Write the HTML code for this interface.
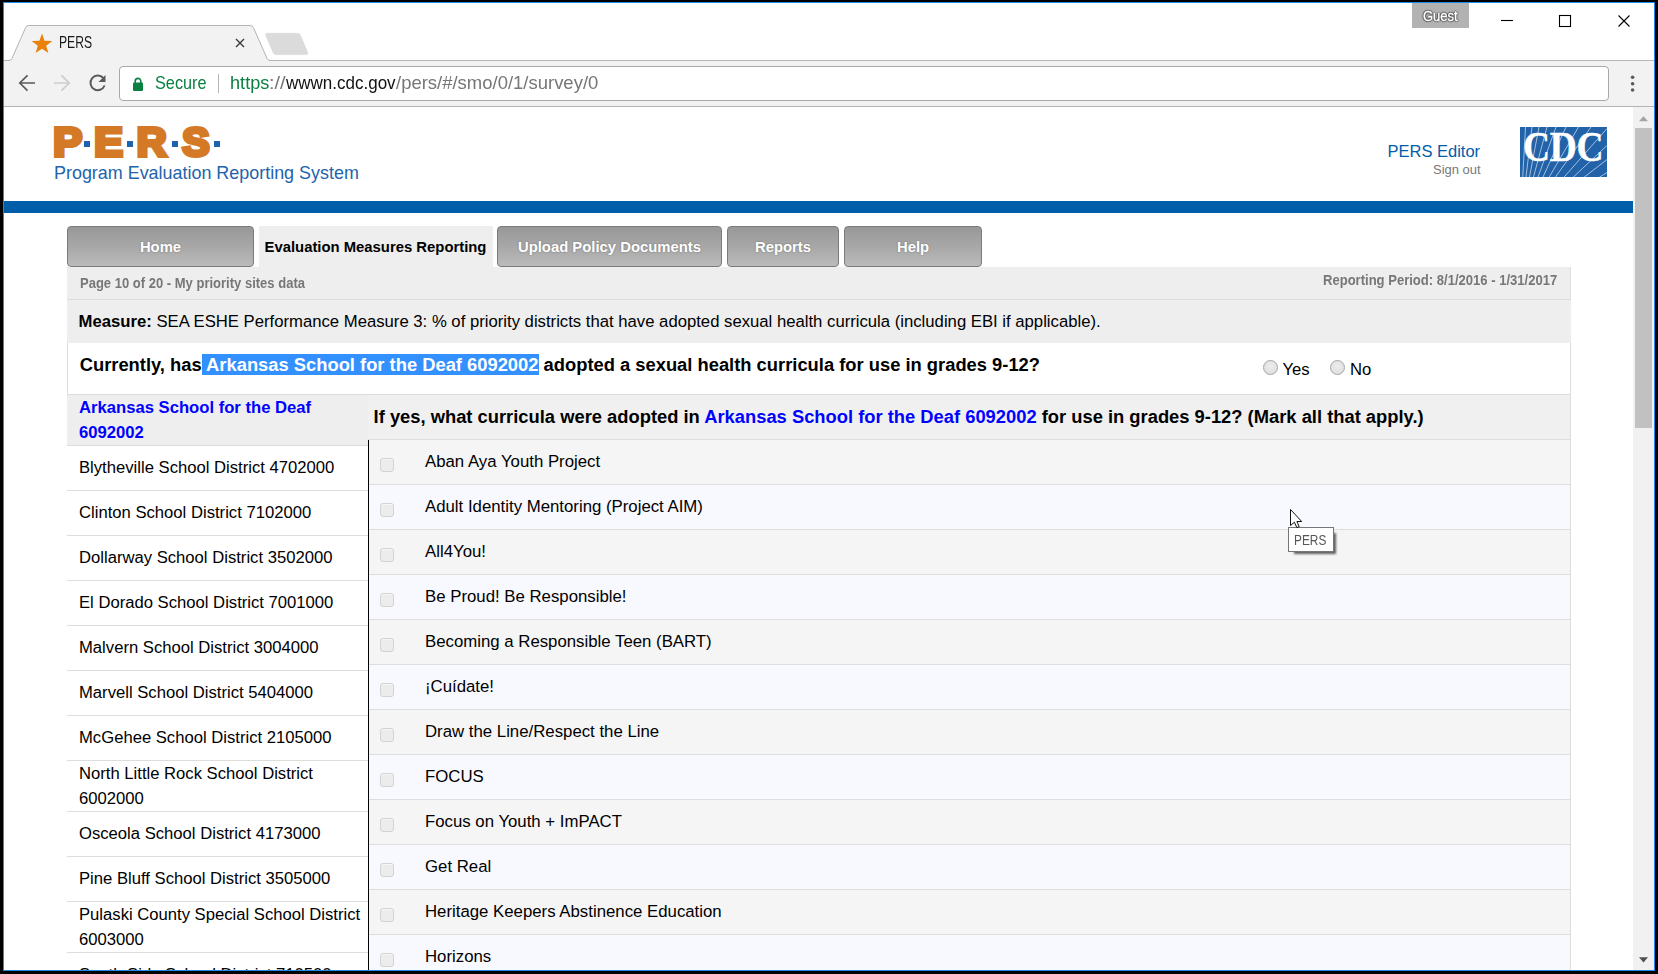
<!DOCTYPE html>
<html lang="en">
<head>
<meta charset="utf-8">
<title>PERS</title>
<style>
*{box-sizing:border-box;margin:0;padding:0}
html,body{width:1658px;height:974px;overflow:hidden;background:#000}
body{position:relative;font-family:"Liberation Sans",Arial,sans-serif;color:#000}
.abs{position:absolute}
#win{position:absolute;left:3px;top:2px;width:1652px;height:969px;background:#fff;border:1px solid #1c8ae6;overflow:hidden}
/* everything inside #win is positioned in screen coords via #sc (offset -4,-3) */
#sc{position:absolute;left:-4px;top:-3px;width:1658px;height:974px}
.t{position:absolute;white-space:nowrap;line-height:1}
/* chrome */
#toolbar{left:4px;top:60px;width:1650px;height:46px;background:#f2f2f2}
#tbline{left:4px;top:106px;width:1650px;height:1px;background:#b4b2b4}
#omni{left:119px;top:66px;width:1490px;height:35px;background:#fff;border:1px solid #a9a9a9;border-radius:4px}
.ui{font-family:"Liberation Sans",Arial,sans-serif;transform-origin:0 0}
/* page */
#bluebar{left:4px;top:201px;width:1629px;height:12px;background:#005daa}
.nav{position:absolute;top:226px;height:41px;border:1px solid #7b7b7b;border-radius:4px;background:linear-gradient(#989898,#a9a9a9 55%,#bbbbbb);color:#fff;font-weight:bold;font-size:14.85px;text-align:center;line-height:40.6px;text-shadow:0 0 2px rgba(0,0,0,.35)}
#navact{position:absolute;left:259px;top:226px;width:234px;height:42px;background:#eee;color:#000;font-weight:bold;font-size:14.85px;text-align:center;line-height:42.6px;text-indent:-1px}
#panel{left:67px;top:267px;width:1504px;height:710px;background:#eee}
.b{font-weight:bold}
.lrow{position:absolute;left:67px;width:301px;border-bottom:1px solid #ddd;background:#fff;font-size:16.65px;line-height:25px;padding-left:12px;display:flex;align-items:center}
.rrow{position:absolute;left:369px;width:1201px;height:45px;border-bottom:1px solid #ddd;font-size:16.8px}
.rrow i{position:absolute;left:11px;top:18px;width:14px;height:14px;border:1px solid #d3d3d3;border-radius:3px;background:#ececec;box-shadow:inset 0 1px 0 #f6f6f6}
.rrow span{position:absolute;left:56px;top:12px;line-height:19px;white-space:nowrap}
.odd{background:#f5f5f5}.even{background:#f8f8ff}
.radio{position:absolute;width:15px;height:15px;border-radius:50%;border:1px solid #a5a5a5;background:radial-gradient(circle at 50% 40%,#ececec,#dcdcdc)}
</style>
</head>
<body>
<div id="win"><div id="sc">

<!-- ===== browser chrome ===== -->
<div class="abs" id="toolbar"></div>
<div class="abs" id="tbline"></div>
<svg class="abs" style="left:4px;top:20px" width="330" height="42" viewBox="4 20 330 42">
  <line x1="4" y1="60.5" x2="334" y2="60.5" stroke="#b9b9b9"/>
  <path d="M4 60.5 H9 Q11 60.5 12 58.3 L25.6 27.6 Q26.5 25.5 28.8 25.5 H250.2 Q252.5 25.5 253.4 27.6 L267 58.3 Q268 60.5 270 60.5 H334 V62 H4 Z" fill="#f2f2f2"/>
  <path d="M4 60.5 H9 Q11 60.5 12 58.3 L25.6 27.6 Q26.5 25.5 28.8 25.5 H250.2 Q252.5 25.5 253.4 27.6 L267 58.3 Q268 60.5 270 60.5 H334" fill="none" stroke="#b3b3b3"/>
  <path d="M267 33.300 H297.500 Q299.500 33.300 300.400 35.300 L307.600 52.300 Q308.400 54.600 306.200 54.600 H276 Q274 54.600 273.100 52.600 L265.900 35.600 Q265.100 33.300 267 33.300 Z" fill="#dbdbdb" stroke="#d2d2d2" stroke-width=".5"/>
  <polygon points="42,33.500 44.600,40.800 52.300,41 46.200,45.700 48.400,53.100 42,48.700 35.600,53.100 37.800,45.700 31.700,41 39.400,40.800" fill="#e8820c"/>
  <path d="M236 39 L244 47 M244 39 L236 47" stroke="#3c3c3c" stroke-width="1.400" fill="none"/>
</svg>
<div class="abs" style="left:334px;top:60px;width:1320px;height:1px;background:#b9b9b9"></div>
<div class="t ui" style="left:59px;top:34.800px;font-size:15.600px;color:#1a1a1a;transform:scaleX(.78)">PERS</div>

<!-- window controls -->
<div class="abs" style="left:1412px;top:3px;width:57px;height:25px;background:#b2b2b2"></div>
<div class="t ui" style="left:1422.800px;top:8px;font-size:15px;color:#fff;-webkit-text-stroke:.45px #fff;text-shadow:0 0 1px #111,0 0 1.500px #222,0 0 1.500px #222,0 0 1.500px #222,0 0 2px #333;transform:scaleX(.865)">Guest</div>
<svg class="abs" style="left:1490px;top:8px" width="150" height="26" viewBox="1490 8 150 26">
  <path d="M1501 20.500 H1513" stroke="#000" stroke-width="1.100"/>
  <rect x="1559.500" y="15.500" width="11" height="11" fill="none" stroke="#000" stroke-width="1.100"/>
  <path d="M1618.500 15.500 L1629.500 26.500 M1629.500 15.500 L1618.500 26.500" stroke="#000" stroke-width="1.100"/>
</svg>

<!-- toolbar icons -->
<svg class="abs" style="left:10px;top:66px" width="106" height="34" viewBox="10 66 106 34">
  <path d="M35 83 H20.500 M27.500 75.300 L19.800 83 L27.500 90.700" fill="none" stroke="#5a5a5a" stroke-width="1.700"/>
  <path d="M54 83 H68.500 M61.500 75.300 L69.200 83 L61.500 90.700" fill="none" stroke="#cdcdcd" stroke-width="1.700"/>
  <path d="M103.300 78 A7.300 7.300 0 1 0 104.600 85.500" fill="none" stroke="#5a5a5a" stroke-width="2"/>
  <path d="M105.500 75 V82 H98.500 Z" fill="#5a5a5a"/>
</svg>
<div class="abs" id="omni"></div>
<svg class="abs" style="left:130px;top:74px" width="16" height="20" viewBox="130 74 16 20">
  <rect x="133" y="82.500" width="10" height="8.500" rx="1" fill="#0b8043"/>
  <path d="M135.200 83 V81.200 A2.800 2.800 0 0 1 140.800 81.200 V83" fill="none" stroke="#0b8043" stroke-width="1.600"/>
</svg>
<div class="t ui" style="left:155px;top:74.800px;font-size:17.800px;color:#0b8043;transform:scaleX(.914)">Secure</div>
<div class="abs" style="left:218px;top:74px;width:1px;height:19px;background:#b5b5b5"></div>
<div class="t ui" style="left:229.500px;top:74.800px;font-size:17.800px;color:#0b8043;transform:scaleX(1.02)">https</div>
<div class="t ui" style="left:269.300px;top:74.800px;font-size:17.800px;color:#767676;transform:scaleX(1.12)">://</div>
<div class="t ui" style="left:286px;top:74.800px;font-size:17.800px;color:#111;transform:scaleX(.956)">wwwn.cdc.gov</div>
<div class="t ui" style="left:395.700px;top:74.800px;font-size:17.800px;color:#767676;transform:scaleX(1.039)">/pers/#/smo/0/1/survey/0</div>
<svg class="abs" style="left:1628px;top:72px" width="10" height="24" viewBox="1628 72 10 24">
  <circle cx="1632.600" cy="77.300" r="1.800" fill="#5a5a5a"/><circle cx="1632.600" cy="83.700" r="1.800" fill="#5a5a5a"/><circle cx="1632.600" cy="90" r="1.800" fill="#5a5a5a"/>
</svg>

<!-- ===== page ===== -->

<!-- header -->
<svg class="abs" style="left:48px;top:118px" width="180" height="48" viewBox="48 118 180 48">
  <g font-family="Liberation Sans, Arial, sans-serif" font-weight="bold" font-size="39.8" fill="#d47a27" stroke="#d47a27" stroke-width="4" stroke-linejoin="miter" stroke-miterlimit="6">
    <text transform="translate(53.2,155.9) scale(1.09,1)">P</text>
    <text transform="translate(94.2,155.9) scale(1.08,1)">E</text>
    <text transform="translate(136.7,155.9) scale(1.04,1)">R</text>
    <text transform="translate(182.2,155.9) scale(1.03,1)">S</text>
  </g>
</svg>
<div class="abs" style="left:84px;top:141px;width:6px;height:6px;background:#1f62ae"></div>
<div class="abs" style="left:127px;top:141px;width:6px;height:6px;background:#1f62ae"></div>
<div class="abs" style="left:172px;top:141px;width:6px;height:6px;background:#1f62ae"></div>
<div class="abs" style="left:214px;top:141px;width:6px;height:6px;background:#1f62ae"></div>
<div class="t" style="left:54px;top:164.8px;font-size:17.93px;color:#2363ab">Program Evaluation Reporting System</div>
<div class="t" style="left:1387.5px;top:142.5px;font-size:16.5px;color:#005daa">PERS Editor</div>
<div class="t" style="left:1433px;top:163.6px;font-size:12.97px;color:#777">Sign out</div>
<svg class="abs" style="left:1520px;top:127px" width="87" height="50" viewBox="0 0 87 50">
  <rect width="87" height="50" fill="#2162a8"/>
  <g stroke="#fff" stroke-width=".7" opacity=".85" fill="none">
    <path d="M0 100 L5.5 0M0 100 L12 0M0 100 L19 0M0 100 L27 0M0 100 L36 0M0 100 L46 0M0 100 L58.500 0M0 100 L71 0M0 100 L87 1.500M0 100 L87 18.500M0 100 L87 32.500M0 100 L87 45.500"/>
  </g>
  <text x="0" y="0" transform="translate(2.9,34.4) scale(.9,1)" font-family="Liberation Serif, serif" font-weight="bold" font-size="41.6" fill="#fff" stroke="#fff" stroke-width=".45" letter-spacing="-.2">CDC</text>
</svg>
<div class="abs" id="bluebar"></div>

<!-- nav -->
<div class="nav" style="left:67px;width:187px">Home</div>
<div id="navact">Evaluation Measures Reporting</div>
<div class="nav" style="left:497px;width:225px">Upload Policy Documents</div>
<div class="nav" style="left:727px;width:112px">Reports</div>
<div class="nav" style="left:844px;width:138px">Help</div>

<!-- panel -->
<div class="abs" id="panel"></div>
<div class="t b" style="left:79.500px;top:276.600px;font-size:13.900px;color:#777;transform-origin:0 0;transform:scaleX(.937)">Page 10 of 20 - My priority sites data</div>
<div class="t b" style="left:1322.500px;top:273.800px;font-size:13.900px;color:#777;transform-origin:0 0;transform:scaleX(.939)">Reporting Period: 8/1/2016 - 1/31/2017</div>
<div class="abs" style="left:67px;top:299px;width:1504px;height:1px;background:#dcdcdc"></div>
<div class="t" style="left:78.5px;top:314px;font-size:16.7px"><b>Measure:</b> SEA ESHE Performance Measure 3: % of priority districts that have adopted sexual health curricula (including EBI if applicable).</div>
<div class="abs" style="left:67px;top:343px;width:1504px;height:51px;background:#fff;border-left:1px solid #ddd;border-right:1px solid #ddd"></div>
<div class="abs" style="left:67px;top:394px;width:1504px;height:1px;background:#ddd"></div>
<div class="abs" style="left:202px;top:354px;width:337px;height:21px;background:#3390ff"></div>
<div class="t b" style="left:79.7px;top:355.5px;font-size:18.35px">Currently, has <span style="color:#fff">Arkansas School for the Deaf 6092002</span> adopted a sexual health curricula for use in grades 9-12?</div>
<div class="radio" style="left:1263px;top:360px"></div>
<div class="t" style="left:1282.5px;top:361.5px;font-size:16.65px">Yes</div>
<div class="radio" style="left:1330px;top:360px"></div>
<div class="t" style="left:1350px;top:361.5px;font-size:16.65px">No</div>

<!-- left list -->
<div class="lrow b" style="top:395px;height:51px;background:#eee;color:#0000ff">Arkansas School for the Deaf<br>6092002</div>
<div class="lrow" style="top:446px;height:45px;padding-bottom:1.2px">Blytheville School District 4702000</div>
<div class="lrow" style="top:491px;height:45px;padding-bottom:1.2px">Clinton School District 7102000</div>
<div class="lrow" style="top:536px;height:45px;padding-bottom:1.2px">Dollarway School District 3502000</div>
<div class="lrow" style="top:581px;height:45px;padding-bottom:1.2px">El Dorado School District 7001000</div>
<div class="lrow" style="top:626px;height:45px;padding-bottom:1.2px">Malvern School District 3004000</div>
<div class="lrow" style="top:671px;height:45px;padding-bottom:1.2px">Marvell School District 5404000</div>
<div class="lrow" style="top:716px;height:45px;padding-bottom:1.2px">McGehee School District 2105000</div>
<div class="lrow" style="top:761px;height:51px">North Little Rock School District<br>6002000</div>
<div class="lrow" style="top:812px;height:45px;padding-bottom:1.2px">Osceola School District 4173000</div>
<div class="lrow" style="top:857px;height:45px;padding-bottom:1.2px">Pine Bluff School District 3505000</div>
<div class="lrow" style="top:902px;height:51px">Pulaski County Special School District<br>6003000</div>
<div class="lrow" style="top:953px;height:45px;padding-bottom:1.2px">South Side School District 710500</div>

<!-- right table -->
<div class="abs" style="left:368px;top:395px;width:1203px;height:45px;background:#f0f0f0;border-bottom:1px solid #ddd"></div>
<div class="t b" style="left:373.6px;top:407.5px;font-size:18.35px">If yes, what curricula were adopted in <span style="color:#0000ff">Arkansas School for the Deaf 6092002</span> for use in grades 9-12? (Mark all that apply.)</div>
<div class="rrow odd" style="top:440px"><i></i><span>Aban Aya Youth Project</span></div>
<div class="rrow even" style="top:485px"><i></i><span>Adult Identity Mentoring (Project AIM)</span></div>
<div class="rrow odd" style="top:530px"><i></i><span>All4You!</span></div>
<div class="rrow even" style="top:575px"><i></i><span>Be Proud! Be Responsible!</span></div>
<div class="rrow odd" style="top:620px"><i></i><span>Becoming a Responsible Teen (BART)</span></div>
<div class="rrow even" style="top:665px"><i></i><span>¡Cuídate!</span></div>
<div class="rrow odd" style="top:710px"><i></i><span>Draw the Line/Respect the Line</span></div>
<div class="rrow even" style="top:755px"><i></i><span>FOCUS</span></div>
<div class="rrow odd" style="top:800px"><i></i><span>Focus on Youth + ImPACT</span></div>
<div class="rrow even" style="top:845px"><i></i><span>Get Real</span></div>
<div class="rrow odd" style="top:890px"><i></i><span>Heritage Keepers Abstinence Education</span></div>
<div class="rrow even" style="top:935px"><i></i><span>Horizons</span></div>
<div class="abs" style="left:368px;top:440px;width:1px;height:540px;background:#000"></div>
<div class="abs" style="left:1570px;top:267px;width:1px;height:32px;background:#dedede"></div>
<div class="abs" style="left:1570px;top:343px;width:1px;height:640px;background:#ddd"></div>

<!-- scrollbar -->
<div class="abs" style="left:1633px;top:107px;width:21px;height:863px;background:#f1f1f1"></div>
<div class="abs" style="left:1635px;top:128px;width:17px;height:300px;background:#c1c1c1"></div>
<svg class="abs" style="left:1633px;top:107px" width="21" height="863" viewBox="0 0 21 863">
  <path d="M6 14.200 L10.500 9.200 L15 14.200 Z" fill="#a3a3a3"/>
  <path d="M6 850.300 L10.500 855.500 L15 850.300 Z" fill="#505050"/>
</svg>

<!-- tooltip + cursor -->
<div class="abs" style="left:1294px;top:533px;width:42px;height:21px;background:rgba(0,0,0,.62);filter:blur(1.1px)"></div>
<div class="abs" style="left:1288px;top:527px;width:46px;height:25px;background:#fff;border:1px solid #767676"></div>
<div class="t ui" style="left:1294px;top:532px;font-size:15.300px;color:#575757;transform:scaleX(.775)">PERS</div>
<svg class="abs" style="left:1288px;top:507px" width="16" height="24" viewBox="0 0 16 24">
  <path d="M2.500 2.500 V18.500 L6.400 15.200 L8.900 20.600 L11.200 19.700 L8.900 14.500 H13.700 Z" fill="#fff" stroke="#111" stroke-width="1" stroke-linejoin="round"/>
</svg>

</div></div>
</body>
</html>
